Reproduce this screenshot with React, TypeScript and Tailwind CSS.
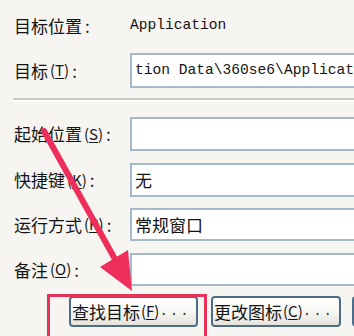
import React from "react";

const cjk = "font-['SimSun','Noto_Sans_CJK_SC',sans-serif]";
const mono = "font-['Liberation_Mono',monospace]";

function Label({ text, mnemonic }: { text: string; mnemonic?: string }) {
  return (
    <div className="w-[116px] shrink-0 flex items-center whitespace-nowrap">
      <span>{text}</span>
      {mnemonic && (
        <span className="text-[15px] ml-[2px]">
          (<span className="underline underline-offset-2">{mnemonic}</span>)
        </span>
      )}
      <span className="ml-[3px]">:</span>
    </div>
  );
}

function Field({ h, value, latin }: { h: string; value?: string; latin?: boolean }) {
  return (
    <div
      className={`flex-1 ${h} -mr-[20px] bg-white border-2 border-[#a6b9ca] flex items-center pl-[3px] whitespace-nowrap overflow-hidden ${
        latin ? `${mono} text-[14.6px]` : ""
      }`}
    >
      {value}
    </div>
  );
}

function XpButton({ text, mnemonic, className }: { text?: string; mnemonic?: string; className?: string }) {
  return (
    <div
      className={`h-[31px] shrink-0 rounded-[4px] border-2 border-[#4f6c86] bg-gradient-to-b from-white via-[#f7f7f4] to-[#e4e3dc] flex items-center pl-[1px] whitespace-nowrap ${className ?? ""}`}
    >
      {text && (
        <>
          <span>{text}</span>
          <span className="text-[15px] ml-[1px]">
            (<span className="underline underline-offset-2">{mnemonic}</span>)
          </span>
          <span className={`${mono} text-[14px] tracking-[2px] text-[#333]`}>...</span>
        </>
      )}
    </div>
  );
}

export default function App() {
  return (
    <div className={`relative w-[354px] h-[336px] overflow-hidden bg-[#f6f5f1] text-[17px] text-[#141414] ${cjk}`}>
      <div className="pl-[14px] pt-[14px] flex flex-col">
        <div className="flex h-[24px] items-center">
          <Label text="目标位置" />
          <span className={`${mono} text-[14.6px]`}>Application</span>
        </div>

        <div className="flex h-[35px] mt-[15px] items-center">
          <Label text="目标" mnemonic="T" />
          <Field h="h-[35px]" value={"tion Data\\360se6\\Applicat"} latin />
        </div>

        <div className="mt-[10px] -ml-[1px] border-t-2 border-[#cbc8c0] border-b-2 border-b-white h-[4px]" />

        <div className="flex h-[34px] mt-[15px] items-center">
          <Label text="起始位置" mnemonic="S" />
          <Field h="h-[34px]" />
        </div>

        <div className="flex h-[34px] mt-[12px] items-center">
          <Label text="快捷键" mnemonic="K" />
          <Field h="h-[34px]" value="无" />
        </div>

        <div className="flex h-[33px] mt-[11px] items-center">
          <Label text="运行方式" mnemonic="R" />
          <Field h="h-[33px]" value="常规窗口" />
        </div>

        <div className="flex h-[33px] mt-[12px] items-center">
          <Label text="备注" mnemonic="O" />
          <Field h="h-[33px]" />
        </div>

        <div className="flex mt-[10px] ml-[55px] gap-[13px]">
          <XpButton text="查找目标" mnemonic="F" className="w-[129px]" />
          <XpButton text="更改图标" mnemonic="C" className="w-[130px]" />
          <XpButton className="w-[130px] ml-[-2px]" />
        </div>
      </div>

      {/* annotation overlay */}
      <div className="absolute left-[47px] top-[294px] w-[160px] h-[60px] border-[3px] border-[#e8325a]" />
      <svg className="absolute inset-0" width="354" height="336" viewBox="0 0 354 336">
        <line x1="44" y1="131" x2="116" y2="261" stroke="#ee2f5c" strokeWidth="6" strokeLinecap="round" />
        <polygon points="132,291 128,250 100,267" fill="#ee2f5c" />
      </svg>
    </div>
  );
}
